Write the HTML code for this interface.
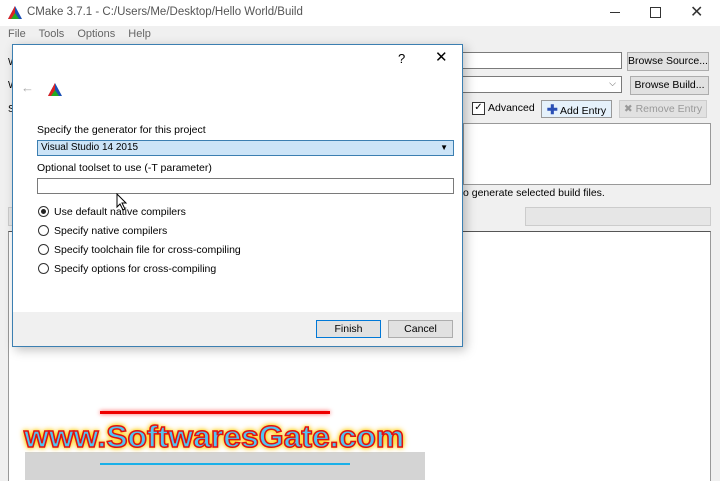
<!DOCTYPE html>
<html><head><style>
body{margin:0;width:720px;height:480px;overflow:hidden;background:#f0f0f0;font-family:"Liberation Sans",sans-serif;font-size:11px;color:#000;position:relative}
.a{position:absolute}
.btn{position:absolute;background:#e1e1e1;border:1px solid #adadad;box-sizing:border-box;text-align:center;font-size:10.5px;line-height:17px}
.radio{position:absolute;width:11px;height:11px;border:1px solid #333;border-radius:50%;box-sizing:border-box;background:#fff}
</style></head><body>
<div class="a" style="left:0;top:0;width:720px;height:26px;background:#fff"></div>
<svg class="a" style="left:8px;top:6px" width="14" height="13"><polygon points="7,0 0,13 14,13" fill="#1a4fb5"/><polygon points="7,0 0,13 7,13" fill="#d22"/><polygon points="3,13 11,13 7,7" fill="#2a2"/></svg>
<div class="a" style="left:27px;top:6px;font-size:11.5px;color:#555">CMake 3.7.1 - C:/Users/Me/Desktop/Hello World/Build</div>
<div class="a" style="left:610px;top:12px;width:10px;height:1px;background:#333"></div>
<div class="a" style="left:650px;top:7px;width:9px;height:9px;border:1px solid #333"></div>
<div class="a" style="left:690px;top:2px;font-size:16px;color:#333">✕</div>
<div class="a" style="left:8px;top:28px;font-size:11px;color:#666;word-spacing:10px">File Tools Options Help</div>
<div class="a" style="left:8px;top:57px;font-size:10px">W</div>
<div class="a" style="left:8px;top:80px;font-size:10px">W</div>
<div class="a" style="left:8px;top:104px;font-size:10px">S</div>
<div class="a" style="left:462px;top:52px;width:160px;height:17px;background:#fff;border:1px solid #7a7a7a;box-sizing:border-box"></div>
<div class="btn" style="left:627px;top:52px;width:82px;height:19px">Browse Source...</div>
<div class="a" style="left:462px;top:76px;width:160px;height:17px;background:#fff;border:1px solid #7a7a7a;box-sizing:border-box"><span style="position:absolute;right:5px;top:1px;font-size:9px;color:#555">⌵</span></div>
<div class="btn" style="left:630px;top:76px;width:79px;height:19px">Browse Build...</div>
<div class="a" style="left:472px;top:102px;width:11px;height:11px;border:1px solid #333;background:#fff;font-size:10px;line-height:10px;text-align:center">✓</div>
<div class="a" style="left:488px;top:102px;font-size:10.5px">Advanced</div>
<div class="btn" style="left:541px;top:100px;width:71px;height:18px;background:#e5f1fb;border-color:#999"><span style="color:#2a4fb5;font-weight:bold;font-size:13px">✚</span> Add Entry</div>
<div class="btn" style="left:619px;top:100px;width:88px;height:18px;color:#999;border-color:#ccc">✖ Remove Entry</div>
<div class="a" style="left:463px;top:123px;width:246px;height:60px;background:#fff;border:1px solid #999"></div>
<div class="a" style="left:463px;top:187px;font-size:10.5px">o generate selected build files.</div>
<div class="a" style="left:525px;top:207px;width:184px;height:17px;background:#e6e6e6;border:1px solid #ccc"></div>
<div class="a" style="left:8px;top:207px;width:6px;height:17px;background:#e6e6e6;border:1px solid #ccc"></div>
<div class="a" style="left:8px;top:231px;width:701px;height:249px;background:#fff;border-top:1px solid #555;border-left:1px solid #999;border-right:1px solid #999"></div>
<!-- dialog -->
<div class="a" style="left:12px;top:44px;width:451px;height:303px;background:#fff;border:1px solid #3c7fb1;box-sizing:border-box;box-shadow:3px 3px 10px rgba(0,0,0,.25)">
 <div class="a" style="left:385px;top:6px;font-size:13px">?</div>
 <div class="a" style="left:422px;top:3px;font-size:15px">✕</div>
 <div class="a" style="left:8px;top:35px;color:#aaa;font-size:13px">←</div>
 <svg class="a" style="left:35px;top:38px" width="14" height="13"><polygon points="7,0 0,13 14,13" fill="#1a4fb5"/><polygon points="7,0 0,13 7,13" fill="#d22"/><polygon points="3,13 11,13 7,7" fill="#2a2"/></svg>
 <div class="a" style="left:24px;top:79px;font-size:10.5px">Specify the generator for this project</div>
 <div class="a" style="left:24px;top:95px;width:417px;height:16px;background:#cce4f7;border:1px solid #3c7fb1;box-sizing:border-box;font-size:10px;line-height:14px;padding-left:3px">Visual Studio 14 2015<span style="position:absolute;right:5px;top:0;font-size:8px">▼</span></div>
 <div class="a" style="left:24px;top:117px;font-size:10.5px">Optional toolset to use (-T parameter)</div>
 <div class="a" style="left:24px;top:133px;width:417px;height:16px;border:1px solid #7a7a7a;box-sizing:border-box"></div>
 <div class="radio" style="left:25px;top:161px"><div style="position:absolute;left:2px;top:2px;width:5px;height:5px;border-radius:50%;background:#222"></div></div>
 <div class="a" style="left:41px;top:161px;font-size:10.5px">Use default native compilers</div>
 <div class="radio" style="left:25px;top:180px"></div>
 <div class="a" style="left:41px;top:180px;font-size:10.5px">Specify native compilers</div>
 <div class="radio" style="left:25px;top:199px"></div>
 <div class="a" style="left:41px;top:199px;font-size:10.5px">Specify toolchain file for cross-compiling</div>
 <div class="radio" style="left:25px;top:218px"></div>
 <div class="a" style="left:41px;top:218px;font-size:10.5px">Specify options for cross-compiling</div>
 <div class="a" style="left:0;top:267px;width:449px;height:34px;background:#f0f0f0"></div>
 <div class="btn" style="left:303px;top:275px;width:65px;height:18px;border:1px solid #0078d7">Finish</div>
 <div class="btn" style="left:375px;top:275px;width:65px;height:18px">Cancel</div>
</div>
<svg class="a" style="left:116px;top:193px" width="12" height="18"><path d="M1,1 L1,14 L4,11 L7,17 L9,16 L6,10 L10,10 Z" fill="#fff" stroke="#000" stroke-width="1"/></svg>
<!-- watermark -->
<div class="a" style="left:25px;top:452px;width:400px;height:28px;background:#d4d4d4"></div>
<div class="a" style="left:100px;top:411px;width:230px;height:3px;background:#e00;box-shadow:0 0 4px #f55"></div>
<div class="a" style="left:100px;top:463px;width:250px;height:2px;background:#1ab0e8"></div>
<div class="a" style="left:24px;top:419px;font-size:31px;font-weight:bold;color:#52c4f2;-webkit-text-stroke:1.5px #e01010;text-shadow:0 0 3px #ffd800,0 0 5px #ffd800,0 0 7px #ffb000;transform:scaleX(1.03);transform-origin:left top">www.SoftwaresGate.com</div>
</body></html>
